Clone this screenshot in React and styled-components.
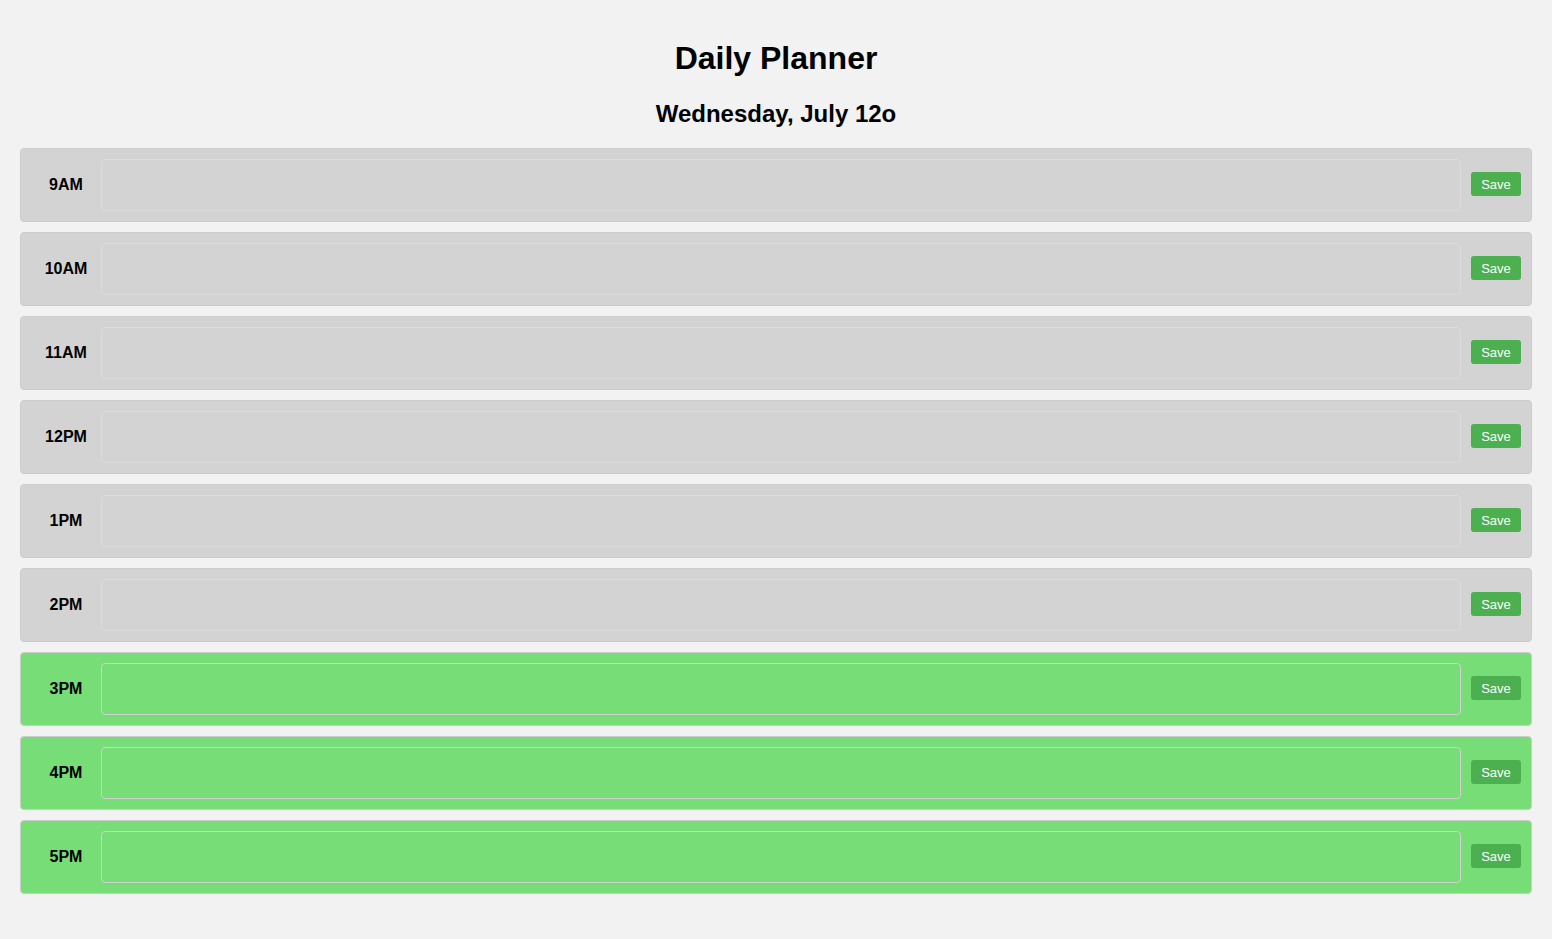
import React, { useState } from 'react';
import styled, { createGlobalStyle } from 'styled-components';

const GlobalStyle = createGlobalStyle`
    html, body {
        margin: 0;
        padding: 0;
        background-color: #f2f2f2;
        font-family: "Liberation Sans", Arial, sans-serif;
        color: #000;
    }
`
const Page = styled.div`
    padding: 0 20px 45px;
`
const Header = styled.header`
    text-align: center;
    margin-bottom: 20px;
`
const Title = styled.h1`
    margin: 40px 0 0;
    font-size: 32px;
    line-height: 36px;
    font-weight: 700;
`
const DateLine = styled.h2`
    margin: 24px 0 0;
    font-size: 24px;
    line-height: 28px;
    font-weight: 700;
`
const Rows = styled.div`
    display: flex;
    flex-direction: column;
    gap: 10px;
`
const Row = styled.div`
    display: flex;
    align-items: center;
    padding: 10px;
    border: 1px solid #ccc;
    border-radius: 4px;
    background-color: ${props => props.future ? '#77dd77' : '#d3d3d3'};
`
const Hour = styled.div`
    width: 70px;
    text-align: center;
    font-size: 16px;
    font-weight: 700;
`
const Note = styled.textarea`
    flex: 1;
    height: 52px;
    box-sizing: border-box;
    border: 1px solid ${props => props.future ? '#d0d0d0' : '#dcdcdc'};
    border-radius: 4px;
    background: transparent;
    resize: none;
    padding: 6px;
    font-family: inherit;
    font-size: 14px;
    outline: none;
`
const SaveButton = styled.button`
    margin-left: 10px;
    margin-bottom: 2px;
    width: 50px;
    height: 24px;
    border: none;
    border-radius: 3px;
    background-color: #4caf50;
    color: #fff;
    font-family: "Liberation Sans", Arial, sans-serif;
    font-size: 13px;
    cursor: pointer;
    padding: 0;
`

const hours = [
    { label: '9AM', future: false },
    { label: '10AM', future: false },
    { label: '11AM', future: false },
    { label: '12PM', future: false },
    { label: '1PM', future: false },
    { label: '2PM', future: false },
    { label: '3PM', future: true },
    { label: '4PM', future: true },
    { label: '5PM', future: true },
]

const App = () => {
    const [notes, setNotes] = useState({})

    return (
        <Page>
            <GlobalStyle />
            <Header>
                <Title>Daily Planner</Title>
                <DateLine>Wednesday, July 12o</DateLine>
            </Header>
            <Rows>
                {hours.map(h => (
                    <Row key={h.label} future={h.future}>
                        <Hour>{h.label}</Hour>
                        <Note
                            future={h.future}
                            value={notes[h.label] || ''}
                            onChange={e => setNotes({ ...notes, [h.label]: e.target.value })}
                        />
                        <SaveButton>Save</SaveButton>
                    </Row>
                ))}
            </Rows>
        </Page>
    )
}

export default App
